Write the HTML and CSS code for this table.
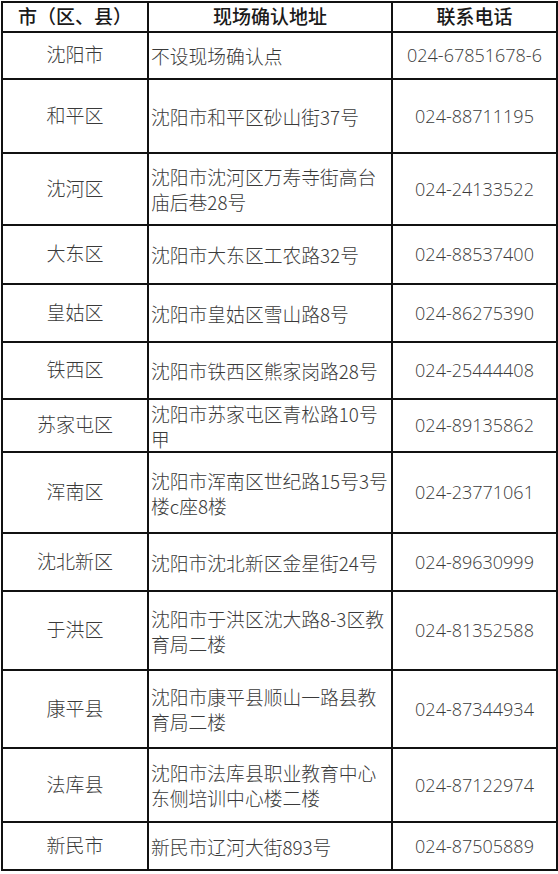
FILE: index.html
```html
<!DOCTYPE html>
<html lang="zh-CN">
<head>
<meta charset="utf-8">
<title>现场确认地址</title>
<link rel="stylesheet" href="styles.css">
</head>
<body>
<table class="sites">
  <colgroup>
    <col class="c-area">
    <col class="c-addr">
    <col class="c-tel">
  </colgroup>
  <thead>
    <tr class="r30"><th>市（区、县）</th><th>现场确认地址</th><th>联系电话</th></tr>
  </thead>
  <tbody>
    <tr class="r47"><td class="area">沈阳市</td><td class="addr">不设现场确认点</td><td class="tel">024-67851678-6</td></tr>
    <tr class="r74"><td class="area">和平区</td><td class="addr">沈阳市和平区砂山街37号</td><td class="tel">024-88711195</td></tr>
    <tr class="r72"><td class="area">沈河区</td><td class="addr">沈阳市沈河区万寿寺街高台庙后巷28号</td><td class="tel">024-24133522</td></tr>
    <tr class="r59"><td class="area">大东区</td><td class="addr">沈阳市大东区工农路32号</td><td class="tel">024-88537400</td></tr>
    <tr class="r58"><td class="area">皇姑区</td><td class="addr">沈阳市皇姑区雪山路8号</td><td class="tel">024-86275390</td></tr>
    <tr class="r57"><td class="area">铁西区</td><td class="addr">沈阳市铁西区熊家岗路28号</td><td class="tel">024-25444408</td></tr>
    <tr class="r53"><td class="area">苏家屯区</td><td class="addr">沈阳市苏家屯区青松路10号甲</td><td class="tel">024-89135862</td></tr>
    <tr class="r81"><td class="area">浑南区</td><td class="addr">沈阳市浑南区世纪路15号3号楼c座8楼</td><td class="tel">024-23771061</td></tr>
    <tr class="r58"><td class="area">沈北新区</td><td class="addr">沈阳市沈北新区金星街24号</td><td class="tel">024-89630999</td></tr>
    <tr class="r79"><td class="area">于洪区</td><td class="addr">沈阳市于洪区沈大路8-3区教育局二楼</td><td class="tel">024-81352588</td></tr>
    <tr class="r78"><td class="area">康平县</td><td class="addr">沈阳市康平县顺山一路县教育局二楼</td><td class="tel">024-87344934</td></tr>
    <tr class="r74"><td class="area">法库县</td><td class="addr">沈阳市法库县职业教育中心东侧培训中心楼二楼</td><td class="tel">024-87122974</td></tr>
    <tr class="r48"><td class="area">新民市</td><td class="addr">新民市辽河大街893号</td><td class="tel">024-87505889</td></tr>
  </tbody>
</table>
</body>
</html>
```

FILE: styles.css
```css
html, body {
  margin: 0;
  padding: 0;
  background: #ffffff;
}

body {
  font-family: "Open Sans", "Noto Sans CJK SC", sans-serif;
  font-size: 19px;
  font-weight: 300;
  color: #3a3a3a;
}

.sites {
  border-collapse: collapse;
  table-layout: fixed;
  width: 555px;
  margin: 1px 0 0 1px;
}

.c-area { width: 146px; }
.c-addr { width: 244px; }
.c-tel { width: 165px; }

.sites th,
.sites td {
  border: 2px solid #111111;
  padding: 0 2px;
  vertical-align: middle;
  line-height: 25px;
}

.sites th {
  font-weight: 500;
  color: #1a1a1a;
  text-align: center;
}

.area { text-align: center; }

.tel {
  text-align: center;
  font-size: 18px;
}

.addr {
  font-family: "Noto Sans CJK SC", "Open Sans", sans-serif;
  font-size: 18.8px;
  text-align: left;
  padding-left: 4px;
  padding-right: 0;
  padding-bottom: 2px;
  word-break: break-all;
}

.r30 { height: 30px; }
.r47 { height: 47px; }
.r48 { height: 48px; }
.r53 { height: 53px; }
.r57 { height: 57px; }
.r58 { height: 58px; }
.r59 { height: 59px; }
.r72 { height: 72px; }
.r74 { height: 74px; }
.r78 { height: 78px; }
.r79 { height: 79px; }
.r81 { height: 81px; }
```
